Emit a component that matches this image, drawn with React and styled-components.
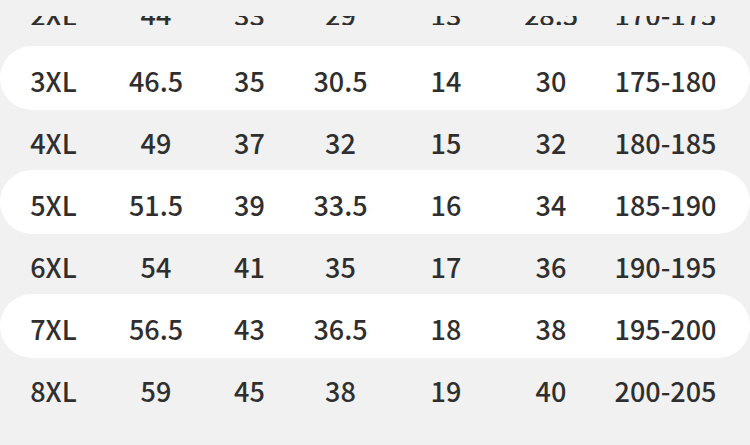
import React from "react";
import styled, { createGlobalStyle } from "styled-components";

const GlobalStyle = createGlobalStyle`
  html, body {
    margin: 0;
    padding: 0;
    background: #f1f1f1;
  }
`;

const rows = [
  ["2XL", "44", "33", "29", "13", "28.5", "170-175"],
  ["3XL", "46.5", "35", "30.5", "14", "30", "175-180"],
  ["4XL", "49", "37", "32", "15", "32", "180-185"],
  ["5XL", "51.5", "39", "33.5", "16", "34", "185-190"],
  ["6XL", "54", "41", "35", "17", "36", "190-195"],
  ["7XL", "56.5", "43", "36.5", "18", "38", "195-200"],
  ["8XL", "59", "45", "38", "19", "40", "200-205"],
];

const Page = styled.div`
  width: 750px;
  height: 445px;
  overflow: hidden;
  background: #f1f1f1;
  display: flex;
  flex-direction: column;
  font-family: "Noto Sans CJK SC", "Noto Sans", sans-serif;
  color: #2f2f2f;
`;

const Table = styled.div`
  display: flex;
  flex-direction: column;
`;

const Row = styled.div`
  display: grid;
  grid-template-columns: 107px 98px 89px 93px 118px 92px 137px;
  align-items: center;
  height: ${(p) => (p.light ? "64px" : "60px")};
  background: ${(p) => (p.light ? "#ffffff" : "transparent")};
  border-radius: ${(p) => (p.light ? "32px" : "0")};
`;

/* the top row of the sheet is cut: only the foot of its glyphs shows */
const CutRow = styled(Row)`
  height: 46px;
  align-items: start;
`;

const Cell = styled.div`
  text-align: center;
  font-size: 27px;
  font-weight: 500;
  line-height: 1;
  padding-top: 4px;
  white-space: nowrap;
`;

const CutCell = styled.div`
  margin-top: 16px;
  height: 9px;
  overflow: hidden;
  display: flex;
  align-items: flex-end;
  justify-content: center;
`;

const CutText = styled.span`
  font-size: 27px;
  font-weight: 500;
  line-height: 27px;
  margin-bottom: -3px;
  white-space: nowrap;
`;

const Footer = styled.div`
  flex: 1;
  background: linear-gradient(180deg, #f1f1f1 0%, #f0f0f1 100%);
`;

export default function App() {
  const [first, ...rest] = rows;
  return (
    <Page>
      <GlobalStyle />
      <Table>
        <CutRow>
          {first.map((c, j) => (
            <CutCell key={j}>
              <CutText>{c}</CutText>
            </CutCell>
          ))}
        </CutRow>
        {rest.map((r, i) => (
          <Row key={r[0]} light={i % 2 === 0}>
            {r.map((c, j) => (
              <Cell key={j}>{c}</Cell>
            ))}
          </Row>
        ))}
      </Table>
      <Footer />
    </Page>
  );
}
